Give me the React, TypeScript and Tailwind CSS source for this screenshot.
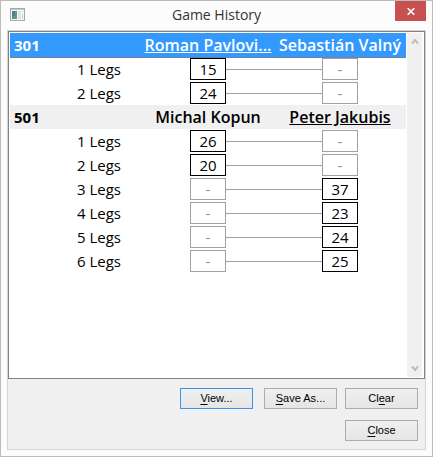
import clsx from "clsx";

type Game = {
  type: string;
  home: string;
  away: string;
  winner: "home" | "away";
  selected?: boolean;
  legs: [string, string][];
};

const games: Game[] = [
  {
    type: "301",
    home: "Roman Pavlovi...",
    away: "Sebastián Valný",
    winner: "home",
    selected: true,
    legs: [
      ["15", "-"],
      ["24", "-"],
    ],
  },
  {
    type: "501",
    home: "Michal Kopun",
    away: "Peter Jakubis",
    winner: "away",
    legs: [
      ["26", "-"],
      ["20", "-"],
      ["-", "37"],
      ["-", "23"],
      ["-", "24"],
      ["-", "25"],
    ],
  },
];

function Score({ value }: { value: string }) {
  return (
    <span
      className={clsx(
        "flex h-[22px] w-9 shrink-0 items-center justify-center border bg-white",
        value === "-" ? "border-[#a0a0a0] text-[#909090]" : "border-black"
      )}
    >
      {value}
    </span>
  );
}

function GameRows({ game }: { game: Game }) {
  return (
    <tbody>
      <tr
        className={clsx(
          "h-6 text-base leading-5",
          game.selected
            ? "border-b border-[#6f8296] bg-[#3399ff] text-white"
            : "bg-[#f0f0f0]"
        )}
      >
        <th scope="row" className="pl-1 text-left text-[15px] font-bold">
          {game.type}
        </th>
        <th className={clsx("font-semibold whitespace-nowrap", game.winner === "home" && "underline")}>
          {game.home}
        </th>
        <th className={clsx("font-semibold whitespace-nowrap", game.winner === "away" && "underline")}>
          {game.away}
        </th>
      </tr>
      {game.legs.map(([home, away], i) => (
        <tr key={i} className="h-6">
          <td className="pr-[21px] text-right">{i + 1} Legs</td>
          <td>
            <div className="flex items-center">
              <span className="flex-1" />
              <Score value={home} />
              <span className="h-px flex-1 bg-[#a0a0a0]" />
            </div>
          </td>
          <td>
            <div className="flex items-center">
              <span className="h-px flex-1 bg-[#a0a0a0]" />
              <Score value={away} />
              <span className="flex-1" />
            </div>
          </td>
        </tr>
      ))}
    </tbody>
  );
}

// accessKey is the underlined letter of the label
function DialogButton({
  label,
  accessKey,
  primary,
}: {
  label: string;
  accessKey: string;
  primary?: boolean;
}) {
  const at = label.indexOf(accessKey);
  return (
    <button
      type="button"
      accessKey={accessKey.toLowerCase()}
      className={clsx(
        "h-[21px] w-[73px] border bg-linear-to-b from-[#f0f0f0] to-[#e5e5e5] text-[11px] leading-none",
        primary ? "border-[#3c94e8]" : "border-[#acacac]"
      )}
    >
      {label.slice(0, at)}
      <span className="underline underline-offset-2">{accessKey}</span>
      {label.slice(at + 1)}
    </button>
  );
}

function ScrollButton({ label, d }: { label: string; d: string }) {
  return (
    <button type="button" aria-label={label} className="flex h-[17px] items-center justify-center">
      <svg viewBox="0 0 8 7" className="h-[7px] w-2" fill="none" stroke="#bcbcbc" strokeWidth="2">
        <path d={d} />
      </svg>
    </button>
  );
}

export default function App() {
  return (
    <div className="flex min-h-screen flex-col border border-[#bcbcbc] bg-[#fcfcfc] px-1.5 pb-1.5 font-['Open_Sans','Noto_Sans',sans-serif] text-black">
      <header className="grid h-[29px] grid-cols-[1fr_auto_1fr] items-start">
        <svg viewBox="0 0 15 13" className="mt-[7px] ml-[3px] h-[13px] w-[15px]" aria-hidden="true">
          <rect x="0.5" y="0.5" width="14" height="12" fill="#f4f7f5" stroke="#a3aaa6" />
          <path d="M1 1.5h13" stroke="#c5cdc9" />
          <rect x="2" y="3" width="5" height="8" fill="#5f9492" />
          <path d="M2 3h3v5h-3z" fill="#4f8086" />
          <rect x="8" y="3" width="3" height="8" fill="#dce5e0" />
          <path d="M12.5 3v1M12.5 6v5" stroke="#c0d2cc" />
        </svg>
        <h1 className="text-sm leading-7 text-[#333]">Game History</h1>
        <button
          type="button"
          aria-label="Close window"
          className="flex h-5 w-[31px] items-center justify-center justify-self-end bg-[#c75050]"
        >
          <svg viewBox="0 0 8 7" className="h-[7px] w-2" fill="none" stroke="#fff" strokeWidth="1.6">
            <path d="M0.7 0.2l6.6 6.6M7.3 0.2l-6.6 6.6" />
          </svg>
        </button>
      </header>

      <main className="flex flex-1 flex-col border border-[#d4d4d4] bg-[#f0f0f0]">
        <div className="flex flex-1 border border-[#828282] bg-white p-px">
          <div className="flex-1">
            <table className="w-full table-fixed border-collapse text-[15px] leading-5">
              {games.map((game) => (
                <GameRows key={game.type} game={game} />
              ))}
            </table>
          </div>
          <div className="flex w-[17px] flex-col justify-between border-x border-white bg-[#f0f0f0]">
            <ScrollButton label="Scroll up" d="M1 5.5L4 2l3 3.5" />
            <ScrollButton label="Scroll down" d="M1 1.5L4 5l3-3.5" />
          </div>
        </div>
        <div className="flex flex-col items-end gap-[11px] pt-[9px] pr-[7px] pb-2 font-['Liberation_Sans',Arial,sans-serif]">
          <div className="flex gap-2">
            <div className="flex gap-[11px]">
              <DialogButton label="View..." accessKey="V" primary />
              <DialogButton label="Save As..." accessKey="S" />
            </div>
            <DialogButton label="Clear" accessKey="e" />
          </div>
          <DialogButton label="Close" accessKey="C" />
        </div>
      </main>
    </div>
  );
}
